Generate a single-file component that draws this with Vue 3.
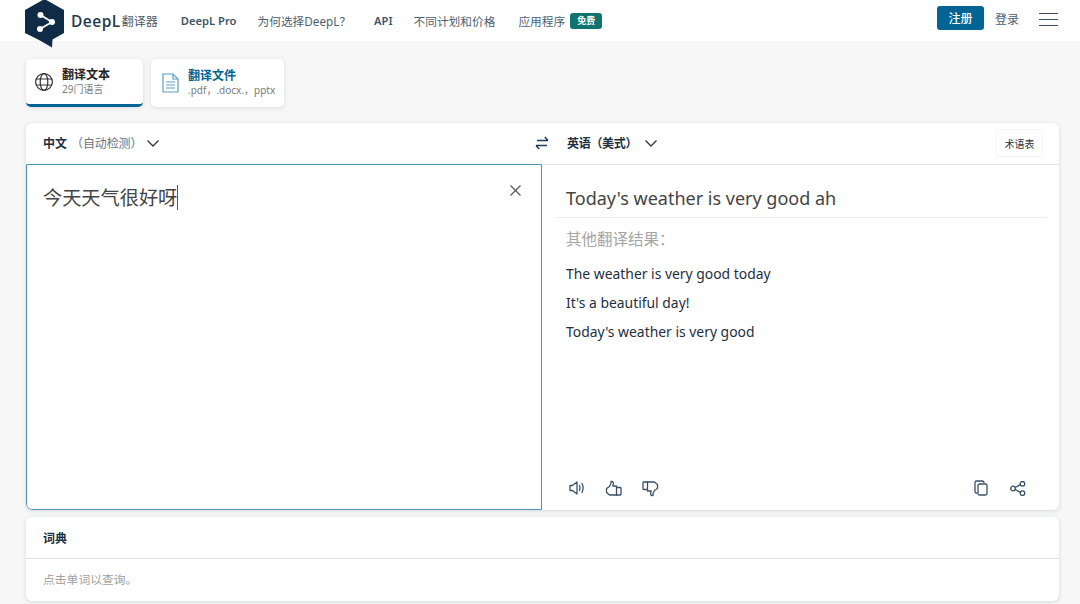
<script setup>
const navItems = [
  { label: 'DeepL Pro', strong: true, gap: 21 },
  { label: '为何选择DeepL？', strong: false, gap: 23 },
  { label: 'API', strong: true, gap: 21 },
  { label: '不同计划和价格', strong: false, gap: 23 },
]
const alternatives = ['The weather is very good today', "It's a beautiful day!", "Today's weather is very good"]
</script>

<template>
  <div class="page">
    <header class="topbar">
      <svg class="logo" viewBox="0 0 40 50" width="40" height="50">
        <path d="M19.5 1 L39 12 V35 L27.5 41.5 L27 49.5 L15 42.5 L0 35 V12 Z" fill="#0f2b46" />
        <path d="M15.5 17 L27 24 L15 31" stroke="#fff" stroke-width="1.8" fill="none" />
        <circle cx="15.5" cy="17" r="3" fill="#fff" />
        <circle cx="27" cy="24" r="3" fill="#fff" />
        <circle cx="15" cy="31" r="3" fill="#fff" />
      </svg>
      <span class="brand">DeepL</span>
      <span class="brand-sub">翻译器</span>
      <nav class="nav">
        <a v-for="item in navItems" :key="item.label" :class="{ strong: item.strong }" :style="{ marginRight: item.gap + 'px' }">{{ item.label }}</a>
        <a>应用程序</a>
        <span class="free">免费</span>
      </nav>
      <div class="top-right">
        <button class="signup">注册</button>
        <a class="login">登录</a>
        <div class="burger"><i></i><i></i><i></i></div>
      </div>
    </header>

    <main class="content">
      <div class="tabs">
        <div class="tab active">
          <svg width="20" height="20" viewBox="0 0 20 20" fill="none" stroke="#333" stroke-width="1.2">
            <circle cx="10" cy="10" r="8.4" />
            <ellipse cx="10" cy="10" rx="3.8" ry="8.4" />
            <path d="M2 7h16M2 13h16" />
          </svg>
          <div class="tab-text">
            <b>翻译文本</b>
            <small>29门语言</small>
          </div>
        </div>
        <div class="tab doc">
          <svg width="17" height="20" viewBox="0 0 17 20" fill="none" stroke="#5a9fc4" stroke-width="1.2">
            <path d="M1 1h10l5 5v13H1z" />
            <path d="M11 1v5h5" />
            <path d="M4 9h9M4 12h9M4 15h9" />
          </svg>
          <div class="tab-text">
            <b>翻译文件</b>
            <small>.pdf，.docx.，pptx</small>
          </div>
        </div>
      </div>

      <section class="card translator">
        <div class="lang-row">
          <div class="lang-left">
            <b>中文</b>
            <span class="auto">（自动检测）</span>
            <svg class="chev" width="12" height="7" viewBox="0 0 12 7" fill="none" stroke="#333" stroke-width="1.3"><path d="M.5.5l5.5 5.5L11.5.5" /></svg>
          </div>
          <svg class="swap" width="14" height="14" viewBox="0 0 14 14" fill="none" stroke="#1f3a56" stroke-width="1.4">
            <path d="M2 4.5h11M9.8 1l3.2 3.5M12 9.5H1M4.2 13L1 9.5" />
          </svg>
          <div class="lang-right">
            <b>英语（美式）</b>
            <svg class="chev" width="12" height="7" viewBox="0 0 12 7" fill="none" stroke="#333" stroke-width="1.3"><path d="M.5.5l5.5 5.5L11.5.5" /></svg>
            <button class="glossary">术语表</button>
          </div>
        </div>
        <div class="panes">
          <div class="source">
            <span class="source-text">今天天气很好呀</span><span class="caret"></span>
            <svg class="clear" width="11" height="11" viewBox="0 0 11 11" stroke="#555" stroke-width="1.2"><path d="M.5.5l10 10M10.5.5l-10 10" /></svg>
          </div>
          <div class="target">
            <div class="result">Today's weather is very good ah</div>
            <div class="others">
              <div class="others-title">其他翻译结果：</div>
              <p v-for="alt in alternatives" :key="alt">{{ alt }}</p>
            </div>
            <div class="actions">
              <div class="actions-group">
                <svg width="16" height="16" viewBox="0 0 16 16" fill="none" stroke="#3a5068" stroke-width="1.3" stroke-linejoin="round" stroke-linecap="round">
                  <path d="M1 5.5h2.5L8 2v12L3.5 10.5H1z" />
                  <path d="M10.5 5.5c.8 1.6.8 3.4 0 5M13 3.5c1.4 2.8 1.4 6.2 0 9" />
                </svg>
                <svg width="17" height="17" viewBox="0 0 17 17" fill="none" stroke="#3a5068" stroke-width="1.3" stroke-linejoin="round" stroke-linecap="round">
                  <path d="M1.5 8.5L4.5 6.5 6 3.5V1.5c1.8-.4 2.8.8 2.3 2.6L7.8 6H11.5v9H4.5L1.5 12.5z" />
                  <path d="M11.5 7.5h3.8a.8.8 0 0 1 .7.8v5.900a.8.8 0 0 1-.7.8h-3.8" />
                </svg>
                <svg width="17" height="17" viewBox="0 0 17 17" fill="none" stroke="#3a5068" stroke-width="1.3" stroke-linejoin="round" stroke-linecap="round">
                  <path d="M15.5 8.5L12.5 10.5 11 13.5V15.5c-1.8.4-2.8-.8-2.3-2.6L9.2 11H5.5V2H12.5L15.5 4.5z" />
                  <path d="M5.5 9.5H1.7a.8.8 0 0 1-.7-.8V2.8a.8.8 0 0 1 .7-.8h3.8" />
                </svg>
              </div>
              <div class="actions-group right">
                <svg width="14" height="16" viewBox="0 0 14 16" fill="none" stroke="#3a5068" stroke-width="1.3" stroke-linejoin="round">
                  <path d="M3 13H2.5A1.5 1.5 0 0 1 1 11.5V2.5A1.5 1.5 0 0 1 2.5 1H8a2 2 0 0 1 2 2" />
                  <rect x="4" y="4" width="9" height="11" rx="1.5" />
                </svg>
                <svg width="16" height="15" viewBox="0 0 16 15" fill="none" stroke="#3a5068" stroke-width="1.3">
                  <circle cx="3" cy="7.5" r="2.3" />
                  <circle cx="12.5" cy="2.8" r="2.3" />
                  <circle cx="12.5" cy="12.2" r="2.3" />
                  <path d="M5 6.5l5.500-2.800M5 8.500l5.500 2.800" />
                </svg>
              </div>
            </div>
          </div>
        </div>
      </section>

      <section class="card dict">
        <div class="dict-head">词典</div>
        <div class="dict-body">点击单词以查询。</div>
      </section>
    </main>
  </div>
</template>

<style>
html, body {
  margin: 0;
  background: #f7f7f7;
}
</style>

<style scoped>
.page {
  width: 1080px;
  height: 604px;
  overflow: hidden;
  background: #f7f7f7;
  color: #1f2f3f;
  font-family: "Noto Sans", "Noto Sans CJK SC", sans-serif;
}

.topbar {
  height: 41px;
  background: #fff;
  display: flex;
  align-items: center;
  padding-left: 25px;
  padding-right: 22px;
  box-sizing: border-box;
}
.logo {
  align-self: flex-start;
  margin-top: -2px;
  margin-bottom: -7px;
  margin-right: 6px;
  flex: none;
}
.brand {
  font-family: "Open Sans", sans-serif;
  font-weight: 600;
  font-size: 15.5px;
  letter-spacing: 0.5px;
  color: #24384e;
  margin-right: 1px;
}
.brand-sub {
  font-size: 12px;
  color: #4c5a68;
  margin-right: 23px;
}
.nav {
  display: flex;
  align-items: center;
  font-size: 11.7px;
  color: #4d5f72;
}
.nav a.strong {
  font-weight: 600;
  font-size: 11.2px;
  color: #405468;
}
.free {
  margin-left: 5px;
  width: 32px;
  height: 16px;
  border-radius: 3px;
  background: #0f7470;
  color: #fff;
  font-size: 9px;
  font-weight: 700;
  display: flex;
  align-items: center;
  justify-content: center;
}
.top-right {
  margin-left: auto;
  display: flex;
  align-items: center;
  margin-top: -3px;
}
.signup {
  width: 47px;
  height: 24px;
  border: none;
  border-radius: 3px;
  background: #006494;
  color: #fff;
  font: 500 12px "Noto Sans", "Noto Sans CJK SC", sans-serif;
  padding: 0;
  margin-right: 11px;
  margin-top: -2px;
}
.login {
  font-size: 12px;
  color: #4d5f72;
  margin-right: 20px;
}
.burger {
  width: 19px;
  display: flex;
  flex-direction: column;
  gap: 5px;
}
.burger i {
  display: block;
  height: 1px;
  background: #3f4f60;
}

.content {
  padding: 18px 21px 0 26px;
}
.tabs {
  display: flex;
  gap: 8px;
  height: 48px;
}
.tab {
  background: #fff;
  border-radius: 5px;
  box-shadow: 0 1px 4px rgba(40, 50, 70, 0.14);
  display: flex;
  align-items: center;
  box-sizing: border-box;
}
.tab.active {
  width: 117px;
  padding-left: 8px;
  gap: 8px;
  border-bottom: 3px solid #006494;
  padding-top: 1px;
}
.tab.doc {
  width: 133px;
  padding-left: 11px;
  gap: 9px;
}
.tab-text {
  display: flex;
  flex-direction: column;
  line-height: 14px;
}
.tab-text b {
  font-size: 12px;
  font-weight: 600;
  color: #222;
}
.tab.doc b {
  color: #006494;
}
.tab-text small {
  font-size: 10px;
  color: #7c7c7c;
}

.card {
  background: #fff;
  border-radius: 6px;
  box-shadow: 0 1px 4px rgba(40, 50, 70, 0.16);
}
.translator {
  margin-top: 16px;
  height: 387px;
  display: flex;
  flex-direction: column;
  overflow: hidden;
}
.lang-row {
  height: 41px;
  flex: none;
  display: flex;
  align-items: center;
  font-size: 12px;
  padding-bottom: 1px;
  box-sizing: border-box;
}
.lang-row b {
  font-weight: 600;
  color: #1f2f3f;
}
.lang-left {
  width: 509px;
  padding-left: 17px;
  box-sizing: border-box;
  display: flex;
  align-items: center;
}
.auto {
  color: #6b7480;
  margin-left: 4px;
  letter-spacing: -0.1px;
}
.chev {
  margin-left: 8px;
}
.lang-left .chev {
  margin-left: 5px;
}
.swap {
  flex: none;
}
.lang-right {
  flex: 1;
  display: flex;
  align-items: center;
  padding-left: 18px;
  padding-right: 16px;
}
.lang-right b {
  letter-spacing: -0.3px;
}
.glossary {
  margin-left: auto;
  width: 47px;
  height: 28px;
  padding: 0;
  border: 1px solid #f4f4f4;
  border-radius: 3px;
  background: #fff;
  color: #333;
  font: 10px "Noto Sans", "Noto Sans CJK SC", sans-serif;
}
.panes {
  flex: 1;
  display: flex;
  min-height: 0;
}
.source {
  position: relative;
  width: 516px;
  box-sizing: border-box;
  border: 1px solid #4f94b8;
  border-radius: 0 0 0 6px;
  padding: 18px 0 0 16px;
  display: flex;
  align-items: flex-start;
  color: #444;
}
.source-text {
  font-size: 19.2px;
  line-height: 30px;
}
.caret {
  width: 1px;
  height: 25px;
  margin-top: 2px;
  background: #555;
}
.clear {
  position: absolute;
  right: 20px;
  top: 20px;
}
.target {
  flex: 1;
  display: flex;
  flex-direction: column;
  border-top: 1px solid #e8e8e8;
  padding-left: 13px;
  padding-right: 12px;
}
.result {
  height: 53px;
  box-sizing: border-box;
  border-bottom: 1px solid #eeeeee;
  padding: 18px 0 0 11px;
  font-size: 18px;
  line-height: 31px;
  color: #444;
}
.others {
  padding-left: 11px;
  flex: 1;
}
.others-title {
  margin-top: 10px;
  font-size: 15.5px;
  line-height: 22px;
  color: #a5a5a5;
  margin-bottom: 14px;
}
.others p {
  margin: 0 0 9px;
  font-size: 13.9px;
  line-height: 20px;
  color: #1f2f3f;
}
.actions {
  height: 44px;
  flex: none;
  display: flex;
  align-items: center;
  justify-content: space-between;
  padding: 0 21px 0 14px;
}
.actions-group {
  display: flex;
  align-items: center;
  gap: 20px;
}
.actions-group.right {
  gap: 22px;
}

.dict {
  margin-top: 7px;
  height: 84px;
}
.dict-head {
  height: 42px;
  box-sizing: border-box;
  border-bottom: 1px solid #dde0e6;
  padding-left: 17px;
  display: flex;
  align-items: center;
  font-size: 12px;
  font-weight: 600;
  color: #1f2f3f;
}
.dict-body {
  padding: 12px 0 0 17px;
  font-size: 11.8px;
  line-height: 16px;
  color: #a0a0a0;
}
</style>
